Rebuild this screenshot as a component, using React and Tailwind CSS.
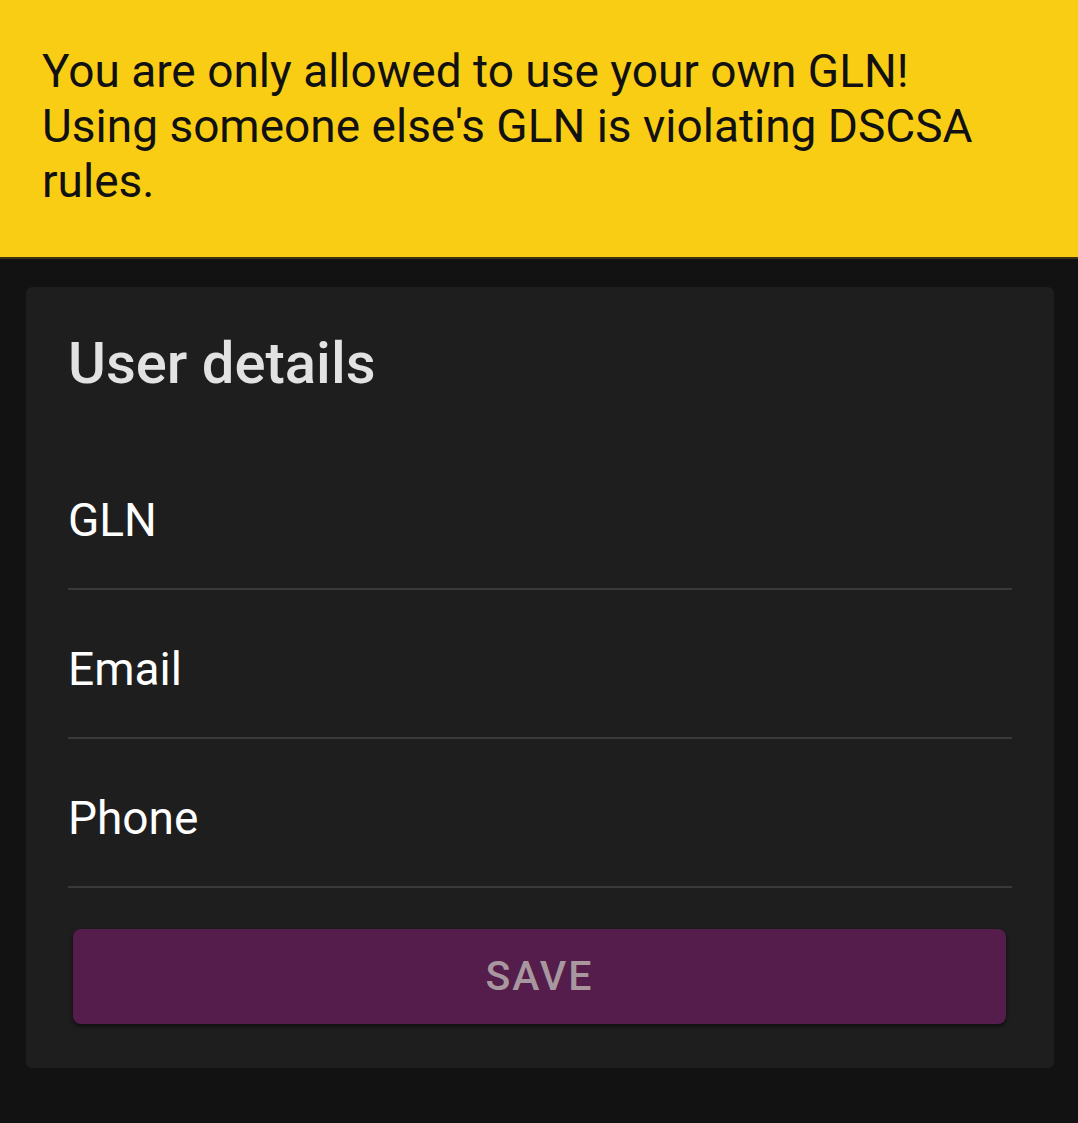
export default function App() {
    const fields = ['GLN', 'Email', 'Phone']

    return (
        <div className="min-h-screen bg-[#121212] font-['Roboto',sans-serif]">
            {/* Warning banner */}
            <div className="bg-[#facd15] px-[42px] pt-[44px] pb-[48px] border-b-2 border-[#3b3412]">
                <p className="text-[46px] leading-[55px] text-[#111111]">
                    You are only allowed to use your own GLN! Using someone else's GLN is violating DSCSA rules.
                </p>
            </div>

            {/* User details card */}
            <div className="ml-[26px] mr-[24px] mt-[28px] rounded-md bg-[#1e1e1e] px-[42px] pt-[47px] pb-[44px]">
                <h2 className="text-[58px] leading-[58px] font-medium text-[#e2e2e2]">User details</h2>

                <div className="mt-[49px]">
                    {fields.map((f) => (
                        <div key={f} className="pt-[52px] pb-[41px] border-b-2 border-[#3a3a3a]">
                            <span className="block text-[46px] leading-[54px] text-white">{f}</span>
                        </div>
                    ))}
                </div>

                <button className="mt-[41px] ml-[5px] mr-[6px] w-[calc(100%-11px)] h-[95px] rounded-lg bg-[#541d4b] shadow-[0_2px_4px_rgba(0,0,0,0.6)] text-[41px] font-medium tracking-[2px] text-[#a8979f]">
                    SAVE
                </button>
            </div>
        </div>
    )
}
